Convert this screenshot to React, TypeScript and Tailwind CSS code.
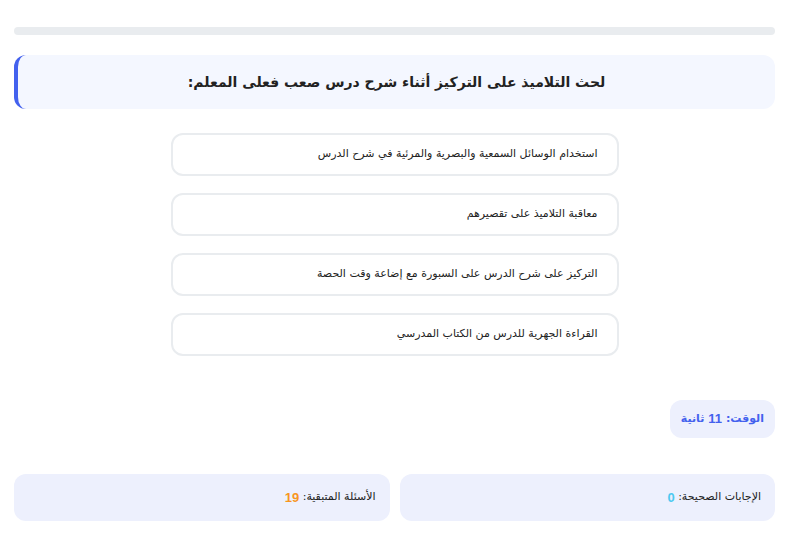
const options = [
  'استخدام الوسائل السمعية والبصرية والمرئية في شرح الدرس',
  'معاقبة التلاميذ على تقصيرهم',
  'التركيز على شرح الدرس على السبورة مع إضاعة وقت الحصة',
  'القراءة الجهرية للدرس من الكتاب المدرسي',
];

export default function App() {
  return (
    <div dir="rtl" className="min-h-[552px] bg-white px-[14px] pt-[27px] font-['DejaVu_Sans','Liberation_Sans',sans-serif] text-[#222]">
      {/* progress */}
      <div className="h-2 w-full rounded-full bg-[#e9ecef]" />

      {/* question */}
      <div className="mt-[20px] rounded-xl border-l-4 border-[#4361ee] bg-[#f4f7ff] py-4 text-center">
        <h2 className="text-[14px] font-bold leading-[22px] text-[#222]">
          لحث التلاميذ على التركيز أثناء شرح درس صعب فعلى المعلم:
        </h2>
      </div>

      {/* options */}
      <div className="mx-auto mt-[24px] flex w-[448px] flex-col gap-[17px]">
        {options.map((opt, i) => (
          <button
            key={i}
            className="h-[43px] rounded-xl border-2 border-[#e9ecef] bg-white px-[19px] text-right text-[11px] text-[#222]"
          >
            {opt}
          </button>
        ))}
      </div>

      {/* timer */}
      <div className="mt-[44px] flex">
        <div className="flex h-[38px] items-center rounded-xl bg-[#edf0fd] px-[11px] text-[11px] font-bold text-[#4361ee]">
          الوقت: <span className="mr-1 font-['Liberation_Sans'] text-[13px]">11</span>&nbsp;ثانية
        </div>
      </div>

      {/* stats */}
      <div className="mt-[36px] grid grid-cols-2 gap-[10px]">
        <div className="flex h-[47px] items-center rounded-xl bg-[#edf0fd] px-[14px] text-[11px] text-[#222]">
          الإجابات الصحيحة:&nbsp;<span className="font-['Liberation_Sans'] text-[13px] font-bold text-[#4cc9f0]">0</span>
        </div>
        <div className="flex h-[47px] items-center rounded-xl bg-[#edf0fd] px-[14px] text-[11px] text-[#222]">
          الأسئلة المتبقية:&nbsp;<span className="font-['Liberation_Sans'] text-[13px] font-bold text-[#f8961e]">19</span>
        </div>
      </div>
    </div>
  );
}
